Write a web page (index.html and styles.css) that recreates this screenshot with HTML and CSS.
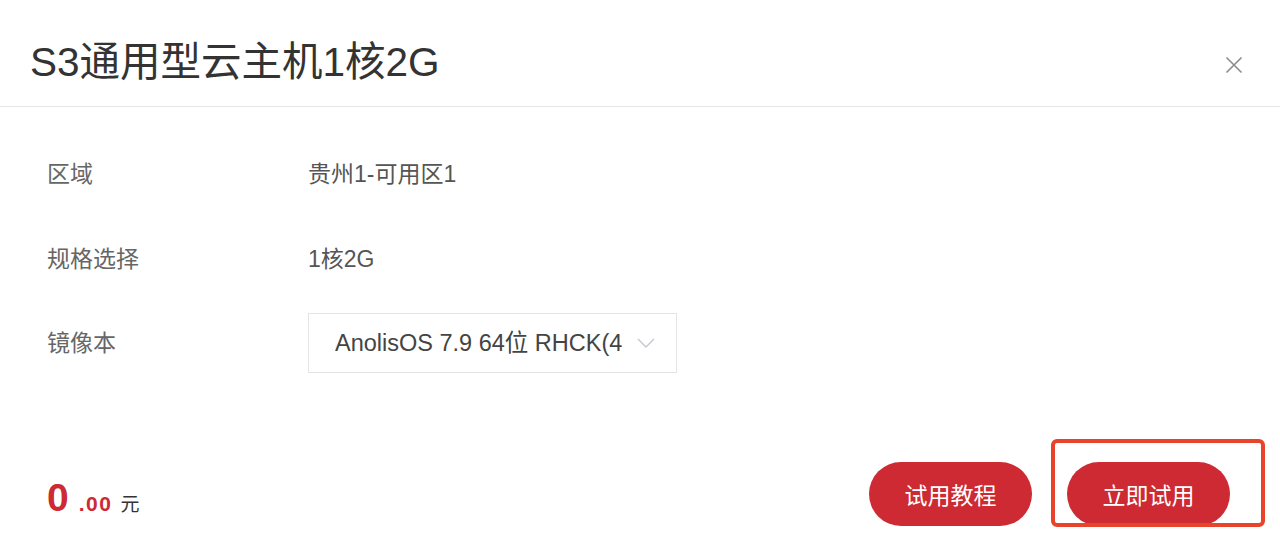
FILE: index.html
```html
<!DOCTYPE html>
<html lang="zh-CN">
<head>
<meta charset="utf-8">
<title>S3通用型云主机1核2G</title>
<link rel="stylesheet" href="styles.css">
</head>
<body>
<div class="dialog">
  <header class="dlg-header">
    <h1 class="dlg-title">S3通用型云主机1核2G</h1>
    <button class="close" aria-label="关闭">
      <svg width="18" height="18" viewBox="0 0 18 18"><path d="M1.5 1.5 L16.5 16.5 M16.5 1.5 L1.5 16.5" stroke="#8c8c8c" stroke-width="1.6" fill="none"/></svg>
    </button>
  </header>
  <section class="dlg-body">
    <div class="row">
      <div class="label">区域</div>
      <div class="value">贵州1-可用区1</div>
    </div>
    <div class="row">
      <div class="label">规格选择</div>
      <div class="value">1核2G</div>
    </div>
    <div class="row">
      <div class="label">镜像本</div>
      <div class="select">
        <span class="select-text">AnolisOS 7.9 64位 RHCK(4.19内核)</span>
        <svg class="chev" width="18" height="10" viewBox="0 0 18 10"><path d="M1 1 L9 9 L17 1" stroke="#c4c7cc" stroke-width="1.4" fill="none"/></svg>
      </div>
    </div>
  </section>
  <footer class="dlg-footer">
    <div class="price">
      <span class="int">0</span><span class="dec">.00</span><span class="unit">元</span>
    </div>
    <div class="actions">
      <button class="btn">试用教程</button>
      <div class="btn-wrap">
        <button class="btn">立即试用</button>
        <span class="highlight"></span>
      </div>
    </div>
  </footer>
</div>
</body>
</html>
```

FILE: styles.css
```css
html, body {
  margin: 0;
  padding: 0;
  background: #ffffff;
  overflow: hidden;
}
body {
  font-family: "Liberation Sans", "Noto Sans CJK SC", sans-serif;
  color: #333;
}
.dialog {
  width: 1280px;
  height: 542px;
  display: flex;
  flex-direction: column;
}
.dlg-header {
  height: 107px;
  box-sizing: border-box;
  border-bottom: 1px solid #e6e6e6;
  display: flex;
  align-items: flex-start;
  justify-content: space-between;
  padding: 42px 37px 0 30px;
}
.dlg-title {
  margin: 0;
  font-size: 40.5px;
  line-height: 40px;
  font-weight: 400;
  color: #333;
}
.close {
  border: 0;
  background: none;
  padding: 0;
  margin-top: 14px;
  width: 18px;
  height: 18px;
  display: flex;
}
.dlg-body {
  padding: 37px 0 0 47px;
  display: grid;
  grid-template-rows: 60px 60px 60px;
  row-gap: 24.5px;
}
.row {
  display: grid;
  grid-template-columns: 261px auto;
  align-items: center;
}
.label {
  font-size: 23px;
  line-height: 24px;
  color: #666;
}
.value {
  font-size: 23px;
  line-height: 24px;
  color: #555;
}
.select {
  width: 369px;
  height: 60px;
  box-sizing: border-box;
  border: 1px solid #e4e4e4;
  display: flex;
  align-items: center;
  padding: 0 20px 0 26px;
  gap: 13px;
}
.select-text {
  flex: 0 0 289px;
  overflow: hidden;
  white-space: nowrap;
  font-size: 23.5px;
  line-height: 26px;
  color: #444;
}
.chev {
  flex: none;
}
.dlg-footer {
  margin-top: 89px;
  height: 64px;
  display: flex;
  justify-content: space-between;
  padding: 0 50px 0 47px;
}
.price {
  align-self: flex-start;
  margin-top: 17px;
  display: flex;
  align-items: baseline;
  line-height: 38px;
}
.int {
  font-size: 39px;
  font-weight: 700;
  color: #cd2a33;
}
.dec {
  font-size: 21px;
  font-weight: 700;
  letter-spacing: 1.5px;
  color: #cd2a33;
  margin-left: 10px;
}
.unit {
  font-size: 19px;
  color: #333;
  margin-left: 8px;
}
.actions {
  display: flex;
  gap: 35px;
}
.btn {
  width: 163px;
  height: 64px;
  border: 0;
  border-radius: 32px;
  background: #cd2a33;
  color: #fff;
  font-family: "Liberation Sans", "Noto Sans CJK SC", sans-serif;
  font-size: 23px;
  padding: 0;
}
.btn-wrap {
  position: relative;
  display: flex;
}
.highlight {
  position: absolute;
  left: -16px;
  top: -23px;
  right: -35px;
  bottom: -1px;
  border: 4px solid #e8432b;
  border-radius: 6px;
  pointer-events: none;
}
```
